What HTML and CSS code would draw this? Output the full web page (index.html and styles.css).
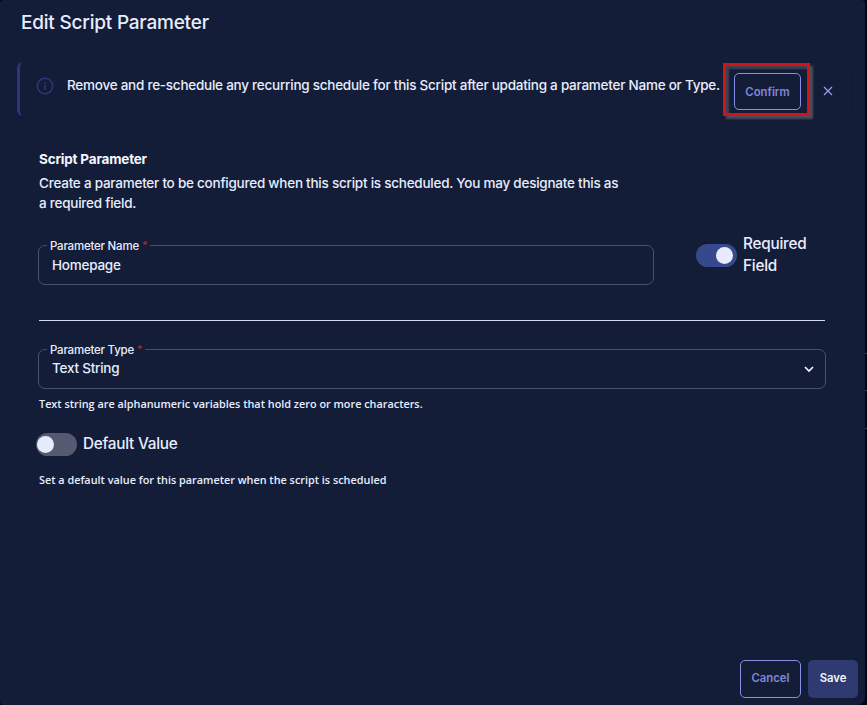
FILE: index.html
```html
<!DOCTYPE html>
<html lang="en">
<head>
<meta charset="utf-8">
<title>Edit Script Parameter</title>
<link rel="stylesheet" href="styles.css">
</head>
<body>
<main class="dialog">
  <h1 class="title"><span>Edit Script Parameter</span></h1>
  <section class="alert">
    <svg class="info" viewBox="0 0 18 18"><circle cx="9" cy="9" r="7.7"/><path d="M9 8v5M9 5v1.5"/></svg>
    <p class="message"><span>Remove and re-schedule any recurring schedule for this Script after updating a parameter Name or Type.</span></p>
    <div class="highlight"><button class="btn outline confirm"><span>Confirm</span></button></div>
    <svg class="close" viewBox="0 0 10 10"><path d="M1 1l8 8M9 1L1 9"/></svg>
  </section>
  <section class="content">
    <h2 class="heading"><span>Script Parameter</span></h2>
    <p class="description"><span>Create a parameter to be configured when this script is scheduled. You may designate this as</span><br>a required field.</p>
    <div class="name-row">
      <fieldset class="field name">
        <legend><span>Parameter Name</span><b>*</b></legend>
        <span class="value">Homepage</span>
      </fieldset>
      <label class="toggle required"><i class="switch on"></i><span>Required<br>Field</span></label>
    </div>
    <div class="divider"></div>
    <fieldset class="field type">
      <legend><span>Parameter Type</span><b>*</b></legend>
      <span class="value">Text String</span>
      <svg class="chevron" viewBox="0 0 10 7"><path d="M1 1l4 4 4-4"/></svg>
    </fieldset>
    <p class="hint"><span>Text string are alphanumeric variables that hold zero or more characters.</span></p>
    <label class="toggle default"><i class="switch"></i><span>Default Value</span></label>
    <p class="hint last"><span>Set a default value for this parameter when the script is scheduled</span></p>
  </section>
  <footer class="actions">
    <button class="btn outline cancel"><span>Cancel</span></button>
    <button class="btn save"><span>Save</span></button>
  </footer>
</main>
</body>
</html>
```
FILE: styles.css
```css
* { box-sizing: border-box; }
body {
  margin: 0;
  /* dark backdrop with the edges of the page's rows showing beside the dialog */
  background:
    linear-gradient(#3a3f4c, #3a3f4c) 0 353px / 100% 1px no-repeat,
    linear-gradient(#3a3f4c, #3a3f4c) 0 390px / 100% 1px no-repeat,
    linear-gradient(#3a3f4c, #3a3f4c) 0 428px / 100% 1px no-repeat,
    #040713;
  font-family: Inter, sans-serif;
  color: #e7edff;
  overflow: hidden;
}
h1, h2, p { margin: 0; white-space: nowrap; }
.dialog {
  display: flex;
  flex-direction: column;
  width: 865px;
  height: 705px;
  background: #141d38;
  border-radius: 4px 4px 8px 4px;
}
.title {
  height: 62px;
  padding: 10px 0 0 21px;
  font-size: 19px;
  line-height: 26px;
  font-weight: 500;
  letter-spacing: -0.21px;
}
.alert {
  display: flex;
  align-items: flex-start;
  height: 54px;
  margin: 0 14px 0 17px;
  border-left: 3px solid #2c377d;
  border-radius: 6px;
  box-shadow: 0 1px 2px #121a34;
}
.info {
  width: 18px;
  height: 18px;
  margin: 15px 0 0 16px;
  fill: none;
  stroke: #2c377d;
  stroke-width: 1.5;
}
.message {
  width: 656px;
  margin: 13px 0 0 13px;
  font-size: 13.5px;
  line-height: 20px;
  font-weight: 500;
  letter-spacing: -0.245px;
}
.highlight {
  display: flex;
  flex: none;
  width: 87px;
  height: 53px;
  margin-top: 1px;
  padding: 7px 8px;
  border: 3px solid #d51218;
  box-shadow: 3px 3px 2px #4b4d59, inset 3px 3px 2px #3e4252;
}
.btn {
  display: flex;
  align-items: center;
  justify-content: center;
  padding: 0 0 2px;
  border: 0;
  border-radius: 5px;
  font: 600 11.3px Inter, sans-serif;
}
.outline {
  background: transparent;
  border: 1px solid #8890e5;
  color: #8188d9;
}
.confirm { flex: none; width: 67px; height: 37px; padding: 0; }
.close {
  width: 10px;
  height: 10px;
  margin: 24px 0 0 13px;
  fill: none;
  stroke: #98a0ee;
  stroke-width: 1.2;
}
.content { flex: 1; padding: 33px 0 0 38px; }
.heading {
  padding-left: 1px;
  font-size: 13.5px;
  line-height: 20px;
  font-weight: 700;
  letter-spacing: -0.19px;
  color: #f5f7ff;
}
.description {
  margin-top: 4px;
  padding-left: 1px;
  font-size: 13.5px;
  line-height: 20px;
  font-weight: 500;
  letter-spacing: -0.24px;
}
.name-row { display: flex; margin-top: 24px; }
.field {
  position: relative;
  height: 48px;
  margin: 0;
  padding: 0 0 0 13px;
  border: 1px solid #485069;
  border-radius: 7px;
  min-width: 0;
}
.field legend {
  display: flex;
  height: 16px;
  margin-left: -5px;
  padding: 0 3px;
  font-size: 11.5px;
  line-height: 18px;
  font-weight: 500;
  letter-spacing: -0.22px;
}
.field b {
  margin-left: 3px;
  color: #a52935;
  font-size: 10px;
  line-height: 17px;
}
.value {
  display: block;
  margin-top: 2px;
  font-size: 13.5px;
  line-height: 20px;
  font-weight: 500;
  letter-spacing: -0.24px;
}
.name { width: 616px; }
.type { width: 788px; margin-top: 20px; }
.type .value { margin-top: 1px; }
.chevron {
  position: absolute;
  right: 11px;
  top: 9px;
  width: 10px;
  height: 7px;
  fill: none;
  stroke: #f0f3ff;
  stroke-width: 1.7;
}
.toggle {
  display: flex;
  font-size: 15.3px;
  line-height: 22px;
  font-weight: 500;
  letter-spacing: -0.24px;
}
.required { margin: -4px 0 -1px 42px; }
.switch {
  flex: none;
  width: 41px;
  height: 23px;
  border-radius: 12px;
  background: #565a70;
}
.switch::before {
  content: "";
  display: block;
  width: 17px;
  height: 17px;
  margin: 3px 0 0 1px;
  border-radius: 50%;
  background: #e7ecfc;
}
.switch.on { margin-top: 11px; background: #38488d; }
.switch.on::before { margin-left: 20px; }
.toggle > span { margin-left: 6px; white-space: nowrap; }
.divider {
  width: 786px;
  height: 1px;
  margin: 35px 0 0 1px;
  background: #d5daf0;
}
.hint {
  margin: 7px 0 0 1px;
  font-family: "Open Sans", sans-serif;
  font-size: 10.85px;
  line-height: 16px;
  font-weight: 600;
}
.default { margin: 21px 0 0 -2px; }
.last { margin-top: 16px; }
.actions {
  display: flex;
  justify-content: flex-end;
  gap: 7px;
  padding: 0 7px 7px 0;
}
.cancel { width: 61px; height: 38px; }
.save { width: 50px; height: 38px; background: #2e3a70; color: #f5f7ff; }
```
